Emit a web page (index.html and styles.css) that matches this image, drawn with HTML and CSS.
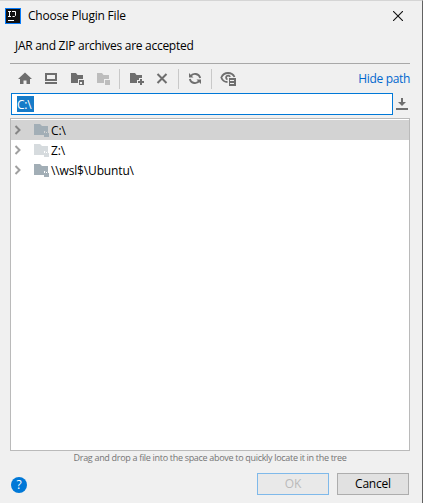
FILE: index.html
```
<!DOCTYPE html>
<html lang="en">
<head>
<meta charset="utf-8">
<title>Choose Plugin File</title>
<link rel="stylesheet" href="styles.css">
</head>
<body>
<main class="dialog">
  <header class="titlebar">
    <svg class="logo" width="16" height="16" viewBox="0 0 16 16"><rect x=".5" y=".5" width="15" height="15" fill="#111" stroke="#087cfa"/><path d="M3 3.500h3M4.500 3.500v5M3 8.500h3M7 3.500h3.500v4l-1 1h-2M3 12.500h6" fill="none" stroke="#fff"/></svg>
    <h1 class="title">Choose Plugin File</h1>
    <svg class="close" width="10" height="10" viewBox="0 0 10 10"><path d="M0 0L10 10M10 0L0 10" stroke="#111" stroke-width="1.1"/></svg>
  </header>
  <p class="subtitle">JAR and ZIP archives are accepted</p>
  <div class="toolbar">
    <svg width="16" height="16" viewBox="0 0 16 16"><path d="M8 1.500l7 6.500h-2v5H9.500V9.500h-3V13H3V8H1z"/></svg>
    <svg width="16" height="16" viewBox="0 0 16 16"><path fill-rule="evenodd" d="M2 2h12v8H2zM4 4v4h8V4zM2 11h12v2H2z"/></svg>
    <svg width="16" height="16" viewBox="0 0 16 16"><path fill-rule="evenodd" d="M2 2h5l1.500 2H14v4H9v4H2zM10 9h5v5h-5zM11 11v2h2v-2z"/></svg>
    <svg class="disabled" width="16" height="16" viewBox="0 0 16 16"><path d="M2 2h5l1.500 2H14v4H9v4H2zM10 9h5v5h-5z"/></svg>
    <i class="sep"></i>
    <svg width="16" height="16" viewBox="0 0 16 16"><path d="M2 2h5l1.500 2H14v3h-3v2H9v3H2zM12 8h2v2h2v2h-2v2h-2v-2h-2v-2h2z"/></svg>
    <svg width="16" height="16" viewBox="0 0 16 16"><path d="M3.500 3l9 9M12.500 3l-9 9" fill="none" stroke="#6e6e6e" stroke-width="2"/></svg>
    <i class="sep"></i>
    <svg width="16" height="16" viewBox="0 0 16 16"><path d="M3.500 5.500A5.300 5.300 0 0 1 13.200 7M12.500 9.500A5.300 5.300 0 0 1 2.800 8" fill="none" stroke="#6e6e6e" stroke-width="1.800"/><path d="M2 2v4.500h4.500zM14 13V8.500H9.500z"/></svg>
    <i class="sep"></i>
    <svg width="16" height="16" viewBox="0 0 16 16"><path d="M7.500 11C4.500 11 2.200 9 1.300 6.500 2.500 3.800 5 2 8 2s5.500 1.800 6.500 4" fill="none" stroke="#6e6e6e" stroke-width="1.800"/><path d="M7.500 8.500a2 2 0 1 1 2.500-2.500" fill="none" stroke="#6e6e6e" stroke-width="1.800"/><path fill-rule="evenodd" d="M9 7h7v8H9zM10 9v1h4V9zM10 12v1h4v-1z"/></svg>
    <a class="link">Hide path</a>
  </div>
  <div class="path-row">
    <div class="path"><span class="selection">C:\</span></div>
    <svg width="12" height="12" viewBox="0 0 12 12"><path d="M5 0h2v4h3L6 8 2 4h3zM0 10h12v2H0z"/></svg>
  </div>
  <svg class="defs" width="0" height="0"><defs>
    <symbol id="arrow" viewBox="0 0 8 10"><path d="M1.500 1l4 4-4 4" fill="none" stroke="currentColor" stroke-width="2"/></symbol>
    <symbol id="folder" viewBox="0 0 16 15"><path d="M0 1h6l2 2h6v5h-4v4H0z"/><path d="M10 10h5v4h-5zM11 10V8.500q1.500-2 3 0V10h-1V9h-1v1z"/></symbol>
  </defs></svg>
  <div class="tree">
    <div class="row selected"><svg class="arrow"><use href="#arrow"/></svg><svg class="folder"><use href="#folder"/></svg><span class="name">C:\</span></div>
    <div class="row"><svg class="arrow"><use href="#arrow"/></svg><svg class="folder faint"><use href="#folder"/></svg><span class="name">Z:\</span></div>
    <div class="row"><svg class="arrow"><use href="#arrow"/></svg><svg class="folder"><use href="#folder"/></svg><span class="name">\\wsl$\Ubuntu\</span></div>
  </div>
  <p class="hint">Drag and drop a file into the space above to quickly locate it in the tree</p>
  <footer class="actions">
    <span class="help">?</span>
    <button class="button" disabled>OK</button>
    <button class="button">Cancel</button>
  </footer>
</main>
</body>
</html>
```
FILE: styles.css
```
* { box-sizing: border-box; }
body { margin: 0; }
svg { flex: none; display: block; }
.dialog {
  width: 423px; height: 503px; overflow: hidden;
  display: flex; flex-direction: column;
  padding: 0 12px 0 10px;
  background: #f0f0f0; color: #000;
  border-top: 1px solid #d5d5d5; border-right: 1px solid #626262;
  font: 12px/16px "Open Sans", "Noto Sans", sans-serif;
}
.titlebar { height: 29px; display: flex; align-items: center; padding-right: 7px; margin-left: -5px; }
.title { margin: 0 auto 0 7px; font-size: 12px; font-weight: 400; letter-spacing: -.21px; }
.subtitle { margin: 0; height: 33px; padding: 8px 0 0 5px; letter-spacing: -.28px; }
.toolbar { height: 30px; display: flex; align-items: center; border-top: 1px solid #a8a8a8; padding-left: 7px; fill: #6e6e6e; }
.toolbar svg { margin-right: 10px; }
.toolbar .disabled { fill: #bdbdbd; }
.sep { width: 1px; height: 20px; background: #c9c9c9; margin-right: 8px; }
.toolbar svg:has(+ .sep) { margin-right: 8px; }
.link { margin-left: auto; color: #0067ce; letter-spacing: -.32px; }
.path-row { height: 25px; display: flex; align-items: flex-start; padding-left: 1px; fill: #6e6e6e; }
.path-row svg { margin: 5px 0 0 3px; }
.path { width: 382px; height: 22px; border: 1px solid #0078d7; background: #fff; padding: 2px 5px; }
.selection { display: block; width: 17px; height: 16px; line-height: 17px; background: #167bc8; color: #fff; letter-spacing: -.2px; }
.defs { position: absolute; }
.tree { height: 333px; border: 1px solid #bababa; background: #fff; padding-top: 1px; }
.row { height: 20px; display: flex; align-items: center; padding-left: 3px; letter-spacing: -.15px; }
.row.selected { background: #d3d3d3; }
.name { padding-top: 2px; }
.arrow { width: 8px; height: 10px; margin: 0 12px 1px 0; color: #a0a0a0; }
.selected .arrow { color: #858585; }
.folder { width: 16px; height: 15px; margin-right: 1px; fill: #a2aeb6; }
.faint { fill: #d6dbde; }
.hint { margin: 0; height: 22px; line-height: 14px; font-size: 9px; color: #757575; text-align: center; letter-spacing: -.31px; }
.actions { display: flex; align-items: center; gap: 8px; height: 22px; padding-right: 1px; }
.help { width: 16px; height: 16px; margin: 2px auto 0 1px; border-radius: 50%; background: #0078d7; color: #fff; text-align: center; }
.button { width: 72px; height: 22px; padding: 0; border: 1px solid #adadad; background: #e1e1e1; color: #000; font: inherit; letter-spacing: -.2px; }
.button:disabled { border-color: #7fb9ea; background: #e9e9e9; color: #bababa; }
```
